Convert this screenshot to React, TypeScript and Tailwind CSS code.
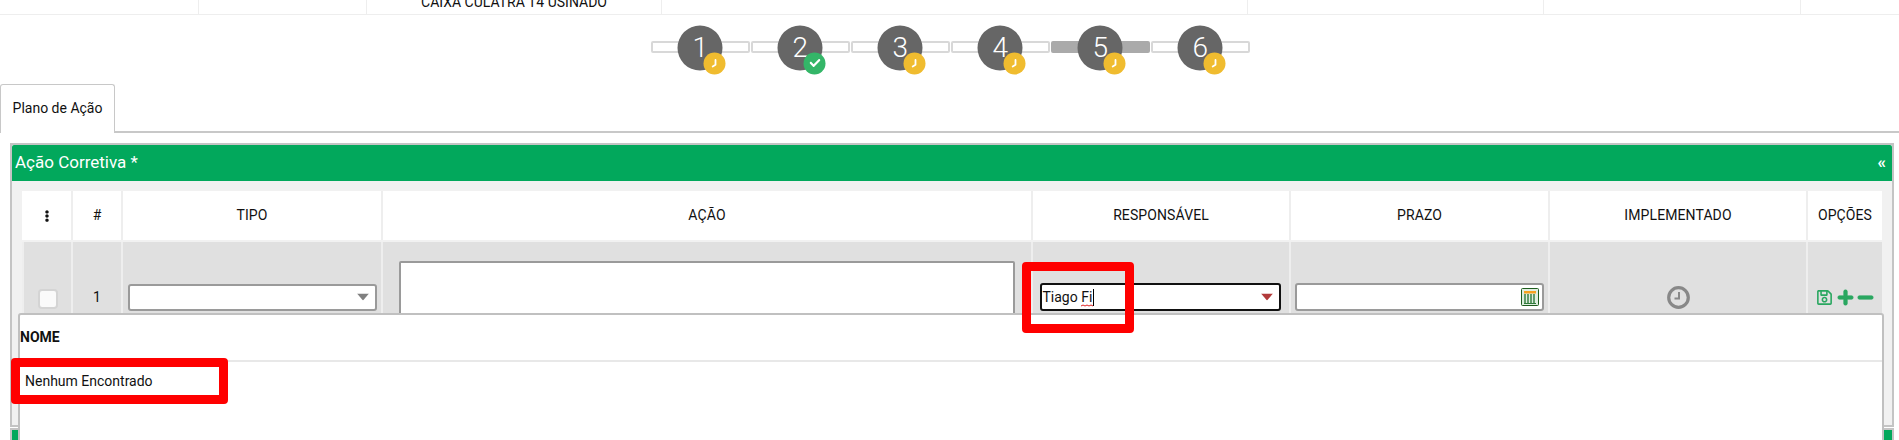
import React from "react";
import { FaCheck, FaEllipsisV, FaMinus, FaPlus, FaRegSave } from "react-icons/fa";

const steps = [
  { n: 1, done: false },
  { n: 2, done: true },
  { n: 3, done: false },
  { n: 4, done: false },
  { n: 5, done: false, active: true },
  { n: 6, done: false },
];

const ClockHands = () => (
  <svg width="12" height="12" viewBox="0 0 12 12" fill="none">
    <path d="M7 2.5V7.2L4.2 9" stroke="white" strokeWidth="1.8" strokeLinecap="round" strokeLinejoin="round" />
  </svg>
);

const Arrow = ({ color }: { color: string }) => (
  <svg width="12" height="7" viewBox="0 0 12 7" className="absolute right-[6px] top-1/2 -translate-y-1/2">
    <path d="M0 0H12L6 7Z" fill={color} />
  </svg>
);

const CalendarIcon = () => (
  <svg width="18" height="18" viewBox="0 0 18 18" className="absolute right-[3px] top-1/2 -translate-y-1/2">
    <rect x="0.5" y="0.5" width="17" height="17" rx="1" fill="#dfeee0" stroke="#1d5c1d" />
    <rect x="3" y="3" width="12" height="2.5" fill="#f7a11f" />
    <path d="M4 6V15M7 6V15M10 6V15M13 6V15" stroke="#2f7a3a" strokeWidth="1.4" />
    <path d="M3 15.5H15" stroke="#2f7a3a" />
  </svg>
);

const headers = ["", "#", "TIPO", "AÇÃO", "RESPONSÁVEL", "PRAZO", "IMPLEMENTADO", "OPÇÕES"];

const App = () => {
  return (
    <div className="relative h-[440px] w-[1899px] overflow-hidden bg-white font-['Roboto',sans-serif] text-[14px] text-[#111]">
      {/* end of the table above, scrolled off */}
      <div className="grid h-[15px] grid-cols-[199px_168px_295px_586px_296px_257px_98px] overflow-hidden border-b border-[#eeeeee]">
        <div className="border-r border-[#eeeeee]" />
        <div className="border-r border-[#eeeeee]" />
        <div className="relative border-r border-[#eeeeee]">
          <span className="absolute bottom-[4px] left-0 right-0 text-center leading-[16px] whitespace-nowrap">
            CAIXA CULATRA T4 USINADO
          </span>
        </div>
        <div className="border-r border-[#eeeeee]" />
        <div className="border-r border-[#eeeeee]" />
        <div className="border-r border-[#eeeeee]" />
        <div />
      </div>

      <div className="mt-[26px] flex gap-[1.5px] pl-[651px]">
        {steps.map((s) => (
          <div
            key={s.n}
            className={`relative h-[12px] w-[98.5px] rounded-[2px] border-2 ${
              s.active ? "border-[#aaaaaa] bg-[#aaaaaa]" : "border-[#d8d8d8] bg-white"
            }`}
          >
            <div className="absolute left-1/2 top-[calc(50%+0.5px)] flex h-[45px] w-[45px] -translate-x-1/2 -translate-y-1/2 items-center justify-center rounded-full bg-[#666666] font-light text-[28px] text-white">
              {s.n}
              <div
                className={`absolute left-[26px] top-[27px] flex h-[22px] w-[22px] items-center justify-center rounded-full ${
                  s.done ? "bg-[#34b668]" : "bg-[#f0bc2f]"
                }`}
              >
                {s.done ? <FaCheck className="text-[11px] text-white" /> : <ClockHands />}
              </div>
            </div>
          </div>
        ))}
      </div>

      <div className="mt-[31px] flex h-[49px] border-b-2 border-[#c8c8c8]">
        <div className="mb-[-2px] flex w-[115px] items-center justify-center rounded-t-[3px] border border-b-0 border-[#c8c8c8] bg-white pb-[2px]">
          Plano de Ação
        </div>
      </div>

      <div className="ml-[10px] mt-[10px] h-[284px] w-[1884px] border-2 border-[#c4c4c4] bg-[#f1f1f1]">
        <div className="flex h-[36px] items-center justify-between rounded-t-[2px] bg-[#02a85c] pl-[3px] pr-[6px] text-[17px] text-white">
          <span>Ação Corretiva *</span>
          <span className="text-[17px] font-bold">«</span>
        </div>

        <div className="ml-[10px] mt-[10px] w-[1860px]">
          <div className="grid h-[49px] grid-cols-[51px_50px_260px_650px_258px_259px_258px_74px] bg-white">
            {headers.map((h, i) => (
              <div
                key={i}
                className="flex items-center justify-center border-r-2 border-[#eeeeee] text-[14px] tracking-[0.1px] last:border-r-0"
              >
                {i === 0 ? <FaEllipsisV className="text-[12px]" /> : h}
              </div>
            ))}
          </div>

          <div className="mt-[2px] grid h-[110px] grid-cols-[51px_50px_260px_650px_258px_259px_258px_74px] bg-[#e0e0e0]">
            <div className="flex items-center justify-center border-l-2 border-r-2 border-[#eeeeee]">
              <div className="mt-[3px] h-[20px] w-[20px] rounded-[4px] border-2 border-[#d4d4d4] bg-[#fafafa]" />
            </div>
            <div className="flex items-center justify-center border-r-2 border-[#eeeeee]">1</div>
            <div className="flex items-center justify-center border-r-2 border-[#eeeeee]">
              <div className="relative h-[27px] w-[249px] rounded-[3px] border-2 border-[#9a9a9a] bg-white">
                <Arrow color="#808080" />
              </div>
            </div>
            <div className="flex items-center justify-center border-r-2 border-[#eeeeee]">
              <div className="h-[72px] w-[616px] rounded-[2px] border-2 border-[#9a9a9a] bg-white" />
            </div>
            <div className="flex items-center justify-center border-r-2 border-[#eeeeee]">
              <div className="relative mr-[2px] h-[28px] w-[241px] rounded-[3px] border-2 border-[#111111] bg-white">
                <div className="flex h-full items-center pl-[1px] leading-none">
                  Tiago&nbsp;
                  <span className="relative">
                    Fi
                    <svg width="12" height="3" viewBox="0 0 12 3" fill="none" className="absolute left-0 top-[14px]">
                      <path d="M0 2L2 1L4 2L6 1L8 2L10 1L12 2" stroke="#e02020" />
                    </svg>
                  </span>
                  <span className="ml-[1px] h-[17px] w-px bg-black" />
                </div>
                <Arrow color="#b23a3a" />
              </div>
            </div>
            <div className="flex items-center justify-center border-r-2 border-[#eeeeee]">
              <div className="relative h-[28px] w-[249px] rounded-[3px] border-2 border-[#9a9a9a] bg-white">
                <CalendarIcon />
              </div>
            </div>
            <div className="flex items-center justify-center border-r-2 border-[#eeeeee]">
              <svg width="23" height="23" viewBox="0 0 23 23" fill="none">
                <circle cx="11.5" cy="11.5" r="9.8" stroke="#888888" strokeWidth="3.2" />
                <path d="M12 6V12.5H7.5" stroke="#888888" strokeWidth="2" />
              </svg>
            </div>
            <div className="flex items-center justify-center gap-[3.5px] text-[#2aa760]">
              <FaRegSave className="text-[17px]" />
              <FaPlus className="text-[17px]" stroke="currentColor" strokeWidth={30} />
              <FaMinus className="text-[17px]" stroke="currentColor" strokeWidth={30} />
            </div>
          </div>
        </div>
      </div>

      <div className="ml-[10px] mt-[1px] h-[40px] w-[1884px] border-2 border-[#c4c4c4] bg-[#f1f1f1]">
        <div className="h-full bg-[#02a85c]" />
      </div>

      {/* autocomplete dropdown */}
      <div className="absolute left-[18px] top-[313px] h-[140px] w-[1866px] rounded-[3px] border-2 border-[#c0c0c0] bg-white">
        <div className="flex h-[47px] items-center border-b-2 border-[#e8e8e8] font-bold">NOME</div>
        <div className="flex h-[38px] items-center pl-[5px]">Nenhum Encontrado</div>
      </div>

      {/* red annotations */}
      <div className="absolute left-[1022px] top-[262px] h-[71px] w-[112px] rounded-[4px] border-[9px] border-[#ff0000]" />
      <div className="absolute left-[11px] top-[358px] h-[46px] w-[217px] rounded-[4px] border-[9px] border-[#ff0000]" />
    </div>
  );
};

export default App;
